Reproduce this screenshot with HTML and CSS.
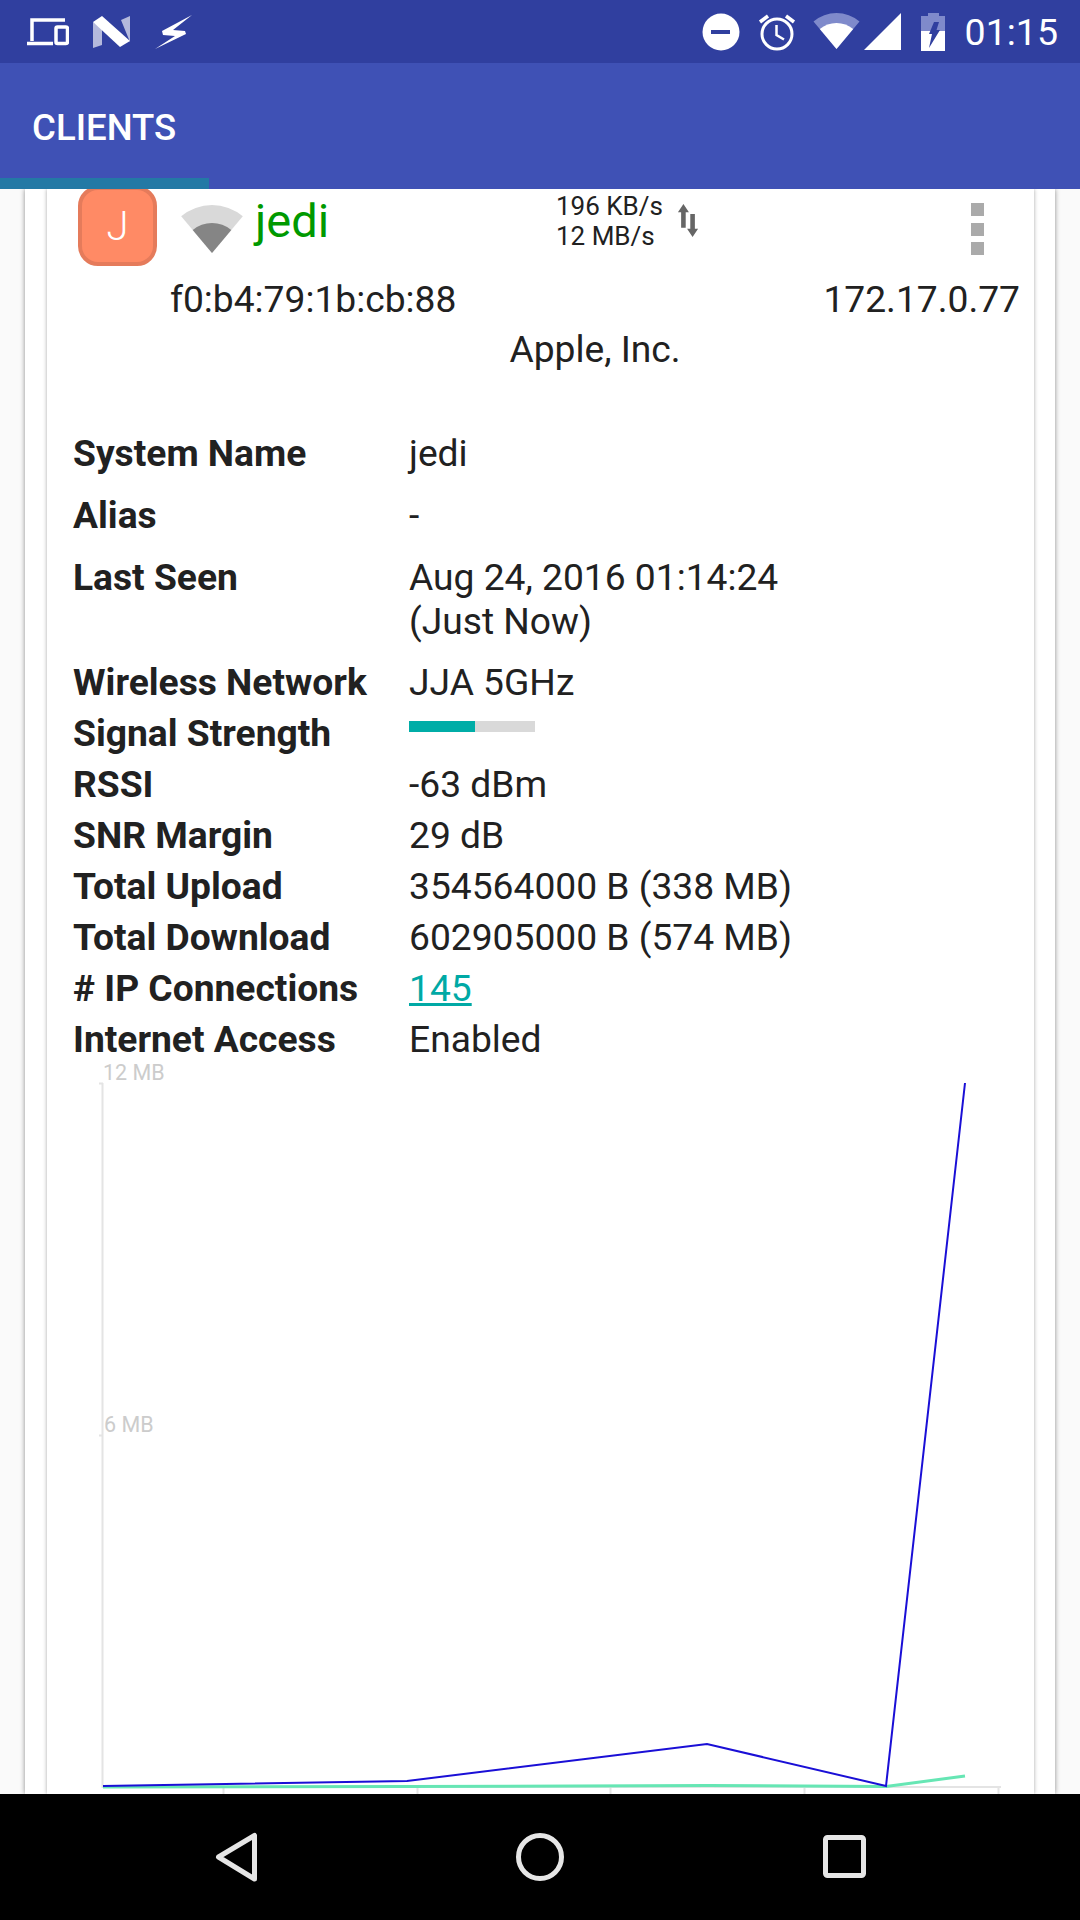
FILE: index.html
```html
<!DOCTYPE html>
<html lang="en">
<head>
    <meta charset="UTF-8">
    <meta name="viewport" content="width=device-width, initial-scale=1.0">
    <title>Clients</title>
    <link rel="stylesheet" href="styles.css">
</head>
<body>
    <div class="status-bar">
        <div class="status-left">
            <svg class="ic-devices" width="42" height="30" viewBox="0 0 42 30">
                <path d="M5 24V3H38M0 26.500H26" fill="none" stroke="#fff" stroke-width="3.500"/>
                <rect x="29" y="10" width="11.500" height="16.500" rx="1.500" fill="none" stroke="#fff" stroke-width="3.500"/>
            </svg>
            <svg class="ic-n" width="38" height="32" viewBox="0 0 38 32">
                <path d="M0 6L9 12V29L0 32ZM28 4L37 0V26Z" fill="#b4b9dc"/>
                <path d="M0 6L9 0L37 25L27 31Z" fill="#fff"/>
            </svg>
            <svg class="ic-bolt" width="40" height="36" viewBox="0 0 40 36">
                <path d="M37 1L7 17L8 21L20 22L0 35L31 20L30 17L18 16Z" fill="#fff"/>
            </svg>
        </div>
        <div class="status-right">
            <svg class="ic-dnd" width="38" height="38" viewBox="0 0 38 38">
                <circle cx="19" cy="19" r="18.500" fill="#fff"/>
                <rect x="9" y="17" width="19" height="4" fill="#303f9f"/>
            </svg>
            <svg class="ic-alarm" width="38" height="38" viewBox="0 0 38 38">
                <circle cx="19" cy="21" r="15" fill="none" stroke="#fff" stroke-width="3"/>
                <path d="M18.500 12V22L26 26.500" fill="none" stroke="#fff" stroke-width="2.500"/>
                <path d="M2 9L10 3M36 9L28 3" fill="none" stroke="#fff" stroke-width="3.500"/>
            </svg>
            <svg class="ic-wifi" width="48" height="37" viewBox="0 0 48 37">
                <path d="M0.500 8.400A36 36 0 0 1 46.500 8.400L23.500 36Z" fill="#7f8acb"/>
                <path d="M6.800 16A26 26 0 0 1 40.200 16L23.500 36Z" fill="#fff"/>
            </svg>
            <svg class="ic-signal" width="37" height="37" viewBox="0 0 37 37">
                <path d="M37 0V37H0Z" fill="#fff"/>
            </svg>
            <svg class="ic-battery" width="24" height="38" viewBox="0 0 24 38">
                <path d="M7 0H18V3H24V18H0V3H7Z" fill="#7f8acb"/>
                <path d="M0 18H24V38H0Z" fill="#fff"/>
                <path d="M13 9H18L15.500 17H19L8 35L11 21H8Z" fill="#303f9f"/>
            </svg>
            <span class="clock">01:15</span>
        </div>
    </div>

    <div class="app-bar">
        <div class="tab-title">CLIENTS</div>
        <div class="tab-indicator"></div>
    </div>

    <div class="content">
        <div class="outer-card">
            <div class="client-card">
                <div class="client-head">
                    <div class="avatar">J</div>
                    <svg class="wifi-strength" width="62" height="48" viewBox="0 0 62 48">
                        <path d="M0.200 11.200A48 48 0 0 1 61.800 11.200L31 48Z" fill="#d9d9d9"/>
                        <path d="M11.700 25A30 30 0 0 1 50.300 25L31 48Z" fill="#858585"/>
                    </svg>
                    <div class="client-name">jedi</div>
                    <div class="speeds">
                        <div>196 KB/s</div>
                        <div>12 MB/s</div>
                    </div>
                    <svg class="updown" width="24" height="33" viewBox="0 0 24 36">
                        <path d="M7 0L13 9H9.500V26H4.500V9H1Z" fill="#666"/>
                        <path d="M17 36L11 27H14.500V11H19.500V27H23Z" fill="#666"/>
                    </svg>
                    <div class="menu-dots">
                        <span></span>
                        <span></span>
                        <span></span>
                    </div>
                </div>

                <div class="addr">
                    <div class="addr-row">
                        <span>f0:b4:79:1b:cb:88</span>
                        <span>172.17.0.77</span>
                    </div>
                    <div class="vendor">Apple, Inc.</div>
                </div>

                <div class="details">
                    <div class="row row-wide">
                        <div class="label">System Name</div>
                        <div class="value">jedi</div>
                    </div>
                    <div class="row row-wide">
                        <div class="label">Alias</div>
                        <div class="value">-</div>
                    </div>
                    <div class="row row-seen">
                        <div class="label">Last Seen</div>
                        <div class="value">Aug 24, 2016 01:14:24<br>(Just Now)</div>
                    </div>
                    <div class="row">
                        <div class="label">Wireless Network</div>
                        <div class="value">JJA 5GHz</div>
                    </div>
                    <div class="row">
                        <div class="label">Signal Strength</div>
                        <div class="value">
                            <div class="signal-bar"><div class="signal-fill"></div></div>
                        </div>
                    </div>
                    <div class="row">
                        <div class="label">RSSI</div>
                        <div class="value">-63 dBm</div>
                    </div>
                    <div class="row">
                        <div class="label">SNR Margin</div>
                        <div class="value">29 dB</div>
                    </div>
                    <div class="row">
                        <div class="label">Total Upload</div>
                        <div class="value">354564000 B (338 MB)</div>
                    </div>
                    <div class="row">
                        <div class="label">Total Download</div>
                        <div class="value">602905000 B (574 MB)</div>
                    </div>
                    <div class="row">
                        <div class="label"># IP Connections</div>
                        <div class="value"><a class="link" href="#">145</a></div>
                    </div>
                    <div class="row">
                        <div class="label">Internet Access</div>
                        <div class="value">Enabled</div>
                    </div>
                </div>

                <!-- viewBox uses page coordinates, easier to read off the points -->
                <svg class="chart" width="986" height="740" viewBox="47 1060 986 740">
                    <g class="axis">
                        <path d="M102.500 1083V1788M99 1083.500H103M99 1435.500H103"/>
                        <path d="M102 1787H1001M223.500 1787V1800M417.500 1787V1800M610.500 1787V1800M804.500 1787V1800M998.500 1787V1800"/>
                    </g>
                    <text class="axis-label" x="103" y="1080">12 MB</text>
                    <text class="axis-label" x="104" y="1432">6 MB</text>
                    <polyline class="line-up" points="103,1787 407,1786.500 708,1785.500 886,1786.500 965,1776"/>
                    <polyline class="line-down" points="103,1786 407,1781 707,1744 886,1786 965,1083"/>
                </svg>
            </div>
        </div>
    </div>

    <div class="nav-bar">
        <svg class="nav-icon" width="64" height="64" viewBox="0 0 64 64">
            <path d="M14.500 32L50.500 10.500V54Z" fill="none" stroke="#e6e6e6" stroke-width="5" stroke-linejoin="round"/>
        </svg>
        <svg class="nav-icon" width="64" height="64" viewBox="0 0 64 64">
            <circle cx="32" cy="32" r="21.500" fill="none" stroke="#e6e6e6" stroke-width="5"/>
        </svg>
        <svg class="nav-icon" width="64" height="64" viewBox="0 0 64 64">
            <rect x="13.500" y="12.500" width="38" height="38" rx="2" fill="none" stroke="#e6e6e6" stroke-width="5"/>
        </svg>
    </div>
</body>
</html>
```

FILE: styles.css
```css
* {
  box-sizing: border-box;
}

html, body {
  margin: 0;
  padding: 0;
}

body {
  width: 1080px;
  height: 1920px;
  display: flex;
  flex-direction: column;
  overflow: hidden;
  font-family: Roboto, "Liberation Sans", sans-serif;
  color: #212121;
  background-color: #fafafa;
}

svg {
  display: block;
  flex-shrink: 0;
}

/* status bar */
.status-bar {
  height: 63px;
  flex-shrink: 0;
  display: flex;
  justify-content: space-between;
  align-items: center;
  padding: 0 22px 0 27px;
  background-color: #303f9f;
}

.status-left,
.status-right {
  display: flex;
  align-items: center;
}

.ic-n {
  margin-left: 24px;
}

.ic-bolt {
  margin-left: 24px;
  filter: blur(0.6px);
}

.ic-alarm {
  margin-left: 18px;
  margin-top: 1px;
}

.ic-wifi {
  margin-left: 17px;
}

.ic-signal {
  margin-left: 3px;
}

.ic-battery {
  margin-left: 20px;
}

.clock {
  margin-left: 20px;
  font-size: 37.500px;
  color: #fff;
}

/* app bar */
.app-bar {
  height: 126px;
  flex-shrink: 0;
  position: relative;
  display: flex;
  align-items: center;
  padding: 3px 0 0 32px;
  background-color: #3f51b5;
}

.tab-title {
  font-size: 36.600px;
  font-weight: 500;
  color: #fff;
}

.tab-indicator {
  position: absolute;
  left: 0;
  bottom: 0;
  width: 209px;
  height: 11px;
  background-color: #2379a5;
}

/* content */
.content {
  flex: 1;
  min-height: 0;
  overflow: hidden;
  padding: 0 25px;
}

.outer-card {
  height: 100%;
  padding: 0 21px 0 22px;
  background-color: #fff;
  box-shadow: 0 0 5px rgba(0, 0, 0, 0.45);
}

.client-card {
  height: 100%;
  background-color: #fff;
  box-shadow: 0 0 4px rgba(0, 0, 0, 0.35);
}

.client-head {
  height: 85px;
  display: flex;
  align-items: flex-start;
  padding-left: 31px;
}

.avatar {
  width: 79px;
  height: 80px;
  margin-top: -3px;
  display: flex;
  justify-content: center;
  align-items: center;
  border: 4px solid #e57b5b;
  border-radius: 20px;
  font-size: 40px;
  font-weight: 300;
  color: #fff;
  background-color: #ff8a65;
}

.wifi-strength {
  margin: 16px 0 0 24px;
}

.client-name {
  margin: 5px 0 0 12px;
  width: 301px;
  font-size: 47px;
  line-height: 54px;
  color: #009900;
}

.speeds {
  width: 120px;
  margin-top: 2px;
  font-size: 26px;
  line-height: 30px;
}

.updown {
  margin-top: 15px;
}

.menu-dots {
  margin: 14px 0 0 271px;
  display: flex;
  flex-direction: column;
  gap: 6.500px;
}

.menu-dots span {
  width: 13px;
  height: 13px;
  background-color: #aaa;
}

.addr {
  margin: 0 14px 0 123px;
  font-size: 37.200px;
  line-height: 50px;
}

.addr-row {
  display: flex;
  justify-content: space-between;
}

.vendor {
  text-align: center;
}

.details {
  margin-top: 57px;
  padding-left: 26px;
  font-size: 37.200px;
}

.row {
  height: 51px;
  display: flex;
  align-items: flex-start;
  line-height: 44px;
}

.row-wide {
  height: 62px;
}

.row-seen {
  height: 105px;
}

.label {
  width: 336px;
  font-weight: 700;
}

.value {
  flex: 1;
}

.signal-bar {
  width: 126px;
  height: 11px;
  margin-top: 10px;
  background-color: #d9d9d9;
}

.signal-fill {
  width: 66px;
  height: 100%;
  background-color: #00ada7;
}

.link {
  color: #00a9a5;
}

/* chart */
.chart {
  margin-top: -8px;
}

.axis path {
  fill: none;
  stroke: #e4e4e4;
  stroke-width: 2;
}

.axis-label {
  font-size: 21.500px;
  fill: #cccccc;
}

.line-up {
  fill: none;
  stroke: #66e6b4;
  stroke-width: 3;
}

.line-down {
  fill: none;
  stroke: #1a0fd6;
  stroke-width: 2;
}

/* nav bar */
.nav-bar {
  height: 126px;
  flex-shrink: 0;
  display: flex;
  justify-content: center;
  align-items: center;
  gap: 240px;
  background-color: #000;
}
```
